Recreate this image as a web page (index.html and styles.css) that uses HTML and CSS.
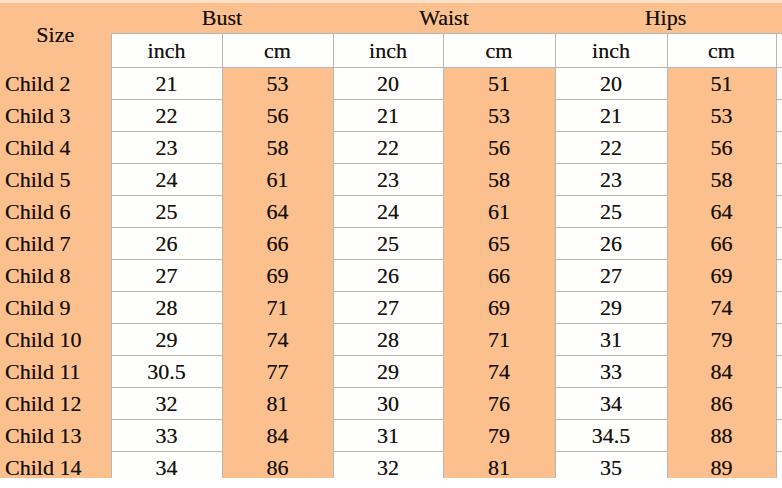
FILE: index.html
```html
<!DOCTYPE html>
<html>
<head>
<meta charset="utf-8">
<link rel="stylesheet" href="styles.css">
</head>
<body>
<div class="sheet">
<table class="size-table">
  <colgroup>
    <col class="c-size"><col class="c-1"><col class="c-2"><col class="c-3"><col class="c-4"><col class="c-5"><col class="c-6"><col class="c-edge">
  </colgroup>
  <thead>
    <tr class="group-row">
      <th class="size-head" rowspan="2">Size</th>
      <th colspan="2">Bust</th>
      <th colspan="2">Waist</th>
      <th colspan="2">Hips</th>
      <th class="edge-top"></th>
    </tr>
    <tr class="unit-row">
      <th class="w">inch</th><th class="w">cm</th>
      <th class="w">inch</th><th class="w">cm</th>
      <th class="w">inch</th><th class="w">cm</th>
      <th class="w edge"></th>
    </tr>
  </thead>
  <tbody>
    <tr><td class="label">Child 2</td><td class="w">21</td><td>53</td><td class="w">20</td><td>51</td><td class="w">20</td><td>51</td><td class="w edge"></td></tr>
    <tr><td class="label">Child 3</td><td class="w">22</td><td>56</td><td class="w">21</td><td>53</td><td class="w">21</td><td>53</td><td class="w edge"></td></tr>
    <tr><td class="label">Child 4</td><td class="w">23</td><td>58</td><td class="w">22</td><td>56</td><td class="w">22</td><td>56</td><td class="w edge"></td></tr>
    <tr><td class="label">Child 5</td><td class="w">24</td><td>61</td><td class="w">23</td><td>58</td><td class="w">23</td><td>58</td><td class="w edge"></td></tr>
    <tr><td class="label">Child 6</td><td class="w">25</td><td>64</td><td class="w">24</td><td>61</td><td class="w">25</td><td>64</td><td class="w edge"></td></tr>
    <tr><td class="label">Child 7</td><td class="w">26</td><td>66</td><td class="w">25</td><td>65</td><td class="w">26</td><td>66</td><td class="w edge"></td></tr>
    <tr><td class="label">Child 8</td><td class="w">27</td><td>69</td><td class="w">26</td><td>66</td><td class="w">27</td><td>69</td><td class="w edge"></td></tr>
    <tr><td class="label">Child 9</td><td class="w">28</td><td>71</td><td class="w">27</td><td>69</td><td class="w">29</td><td>74</td><td class="w edge"></td></tr>
    <tr><td class="label">Child 10</td><td class="w">29</td><td>74</td><td class="w">28</td><td>71</td><td class="w">31</td><td>79</td><td class="w edge"></td></tr>
    <tr><td class="label">Child 11</td><td class="w">30.5</td><td>77</td><td class="w">29</td><td>74</td><td class="w">33</td><td>84</td><td class="w edge"></td></tr>
    <tr><td class="label">Child 12</td><td class="w">32</td><td>81</td><td class="w">30</td><td>76</td><td class="w">34</td><td>86</td><td class="w edge"></td></tr>
    <tr><td class="label">Child 13</td><td class="w">33</td><td>84</td><td class="w">31</td><td>79</td><td class="w">34.5</td><td>88</td><td class="w edge"></td></tr>
    <tr><td class="label">Child 14</td><td class="w">34</td><td>86</td><td class="w">32</td><td>81</td><td class="w">35</td><td>89</td><td class="w edge"></td></tr>
  </tbody>
</table>
</div>
</body>
</html>
```

FILE: styles.css
```css
html, body {
  margin: 0;
  padding: 0;
  background: #ffffff;
}

.sheet {
  width: 782px;
  height: 478px;
  overflow: hidden;
  background: #fcc08f;
  border-top: 3px solid #fde0c6;
  box-sizing: border-box;
}

.size-table {
  border-collapse: collapse;
  table-layout: fixed;
  width: 782px;
  font-family: "Liberation Serif", "Times New Roman", serif;
  font-size: 22px;
  color: #15110e;
  text-shadow: 0 0 0.5px rgba(20, 15, 10, 0.6);
}

.c-size { width: 111px; }
.c-1 { width: 111px; }
.c-2 { width: 111px; }
.c-3 { width: 110px; }
.c-4 { width: 112px; }
.c-5 { width: 112px; }
.c-6 { width: 109px; }
.c-edge { width: 6px; }

.size-table th,
.size-table td {
  padding: 0;
  font-weight: normal;
  text-align: center;
  vertical-align: middle;
  white-space: nowrap;
  overflow: hidden;
}

.group-row th {
  height: 30px;
  background: #fcc08f;
}

.size-head {
  background: #fcc08f;
}

.unit-row th {
  height: 33px;
}

.size-table tbody td {
  height: 31px;
  background: #fcc08f;
}

.size-table .w {
  background: #fefefd;
  border: 1px solid #b9b6b3;
}

.size-table td.label {
  text-align: left;
  padding-left: 5px;
}

.size-table .edge {
  border-right: none;
}
```
